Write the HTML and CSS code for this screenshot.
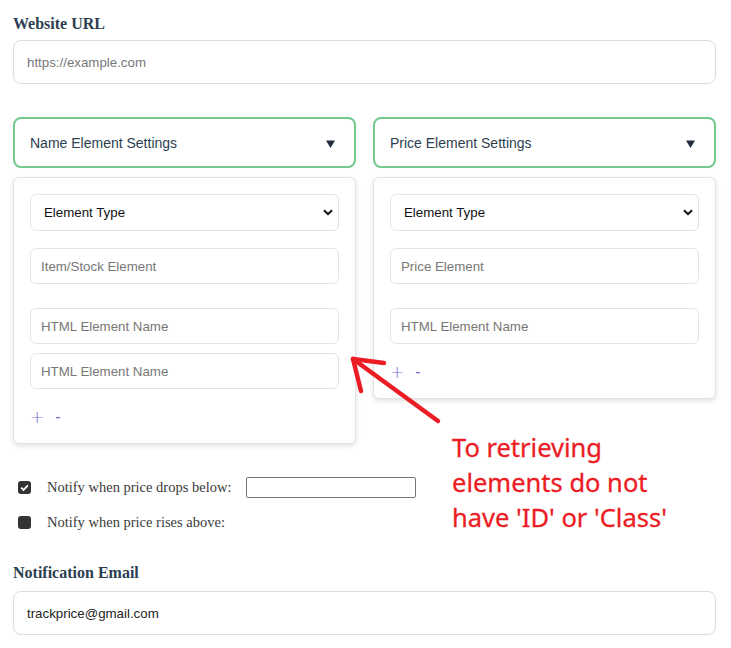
FILE: index.html
```html
<!DOCTYPE html>
<html lang="en">
<head>
<meta charset="utf-8">
<title>Price Tracker</title>
<link rel="stylesheet" href="styles.css">
</head>
<body>
<main class="page">
  <h2 class="field-label">Website URL</h2>
  <input class="text-input" type="text" placeholder="https://example.com">

  <div class="settings-grid">
    <section class="settings">
      <div class="settings-head">
        <span>Name Element Settings</span>
        <svg class="caret" width="9" height="8" viewBox="0 0 9 8"><path d="M0 0.5 H9 L4.5 8 Z" fill="#1f2d3d"/></svg>
      </div>
      <div class="settings-panel">
        <div class="select-wrap">
          <select class="type-select"><option>Element Type</option></select>
          <svg class="chev" width="10" height="7" viewBox="0 0 10 7"><path d="M1 1.2 L5 5.2 L9 1.2" fill="none" stroke="#111" stroke-width="2"/></svg>
        </div>
        <input class="small-input first" type="text" placeholder="Item/Stock Element">
        <div class="name-list">
          <input class="small-input" type="text" placeholder="HTML Element Name">
          <input class="small-input" type="text" placeholder="HTML Element Name">
        </div>
        <div class="controls"><span class="plus">+</span><span class="minus">-</span></div>
      </div>
    </section>

    <section class="settings">
      <div class="settings-head">
        <span>Price Element Settings</span>
        <svg class="caret" width="9" height="8" viewBox="0 0 9 8"><path d="M0 0.5 H9 L4.5 8 Z" fill="#1f2d3d"/></svg>
      </div>
      <div class="settings-panel">
        <div class="select-wrap">
          <select class="type-select"><option>Element Type</option></select>
          <svg class="chev" width="10" height="7" viewBox="0 0 10 7"><path d="M1 1.2 L5 5.2 L9 1.2" fill="none" stroke="#111" stroke-width="2"/></svg>
        </div>
        <input class="small-input first" type="text" placeholder="Price Element">
        <div class="name-list">
          <input class="small-input" type="text" placeholder="HTML Element Name">
        </div>
        <div class="controls"><span class="plus">+</span><span class="minus">-</span></div>
      </div>
    </section>
  </div>

  <div class="notify">
    <div class="notify-row">
      <span class="box checked"><svg width="13" height="13" viewBox="0 0 13 13"><path d="M3.2 6.6 L5.5 8.9 L9.9 4.3" fill="none" stroke="#fff" stroke-width="1.8"/></svg></span>
      <span class="notify-text">Notify when price drops below:</span>
      <input class="price-input" type="text">
    </div>
    <div class="notify-row">
      <span class="box"></span>
      <span class="notify-text">Notify when price rises above:</span>
    </div>
  </div>

  <h2 class="field-label email-label">Notification Email</h2>
  <input class="text-input value" type="text" value="trackprice@gmail.com">

  <svg class="arrow" width="731" height="648" viewBox="0 0 731 648">
    <g fill="none" stroke="#ec1c24" stroke-width="4.5" stroke-linecap="round" stroke-linejoin="round">
      <path d="M438 421 L353 359"/>
      <path d="M384 363 L353 359 L361 391"/>
    </g>
  </svg>
  <p class="note">To retrieving<br>elements do not<br>have 'ID' or 'Class'</p>
</main>
</body>
</html>
```

FILE: styles.css
```css
* { box-sizing: border-box; }

html, body {
  margin: 0;
  padding: 0;
  background: #ffffff;
}

.page {
  position: relative;
  width: 731px;
  height: 648px;
  padding: 14px 15px 0 13px;
  font-family: "Liberation Sans", Arial, sans-serif;
}

.field-label {
  margin: 0 0 6px;
  font-family: "Liberation Serif", "Times New Roman", serif;
  font-size: 16px;
  line-height: 20px;
  font-weight: bold;
  color: #2c3e50;
}

.text-input {
  display: block;
  width: 703px;
  height: 44px;
  padding: 0 13px;
  border: 1px solid #dcdcdc;
  border-radius: 8px;
  font-family: "Liberation Sans", Arial, sans-serif;
  font-size: 13.3px;
  color: #222;
  background: #fff;
  outline: none;
}

.text-input::placeholder { color: #777; }

.settings-grid {
  display: grid;
  grid-template-columns: 343px 343px;
  column-gap: 17px;
  align-items: start;
  margin-top: 33px;
}

.settings-head {
  display: flex;
  justify-content: space-between;
  align-items: center;
  height: 51px;
  padding: 0 19px 0 15px;
  border: 2px solid #72c98a;
  border-radius: 8px;
  font-size: 14px;
  color: #2c3e50;
}

.caret {
  display: block;
  margin-top: 2px;
}

.settings-panel {
  margin-top: 9px;
  padding: 16px;
  border: 1px solid #e2e2e2;
  border-radius: 6px;
  box-shadow: 0 2px 5px rgba(0, 0, 0, 0.12);
  background: #fff;
}

.select-wrap {
  position: relative;
  height: 37px;
}

.type-select {
  appearance: none;
  -webkit-appearance: none;
  width: 100%;
  height: 37px;
  padding: 0 13px;
  border: 1px solid #e4e4e4;
  border-radius: 6px;
  background: #fff;
  font-family: "Liberation Sans", Arial, sans-serif;
  font-size: 13.3px;
  color: #111;
}

.chev {
  position: absolute;
  right: 6px;
  top: 15px;
}

.small-input {
  display: block;
  width: 100%;
  height: 36px;
  padding: 0 10px;
  border: 1px solid #e4e4e4;
  border-radius: 6px;
  font-family: "Liberation Sans", Arial, sans-serif;
  font-size: 13.3px;
  background: #fff;
  outline: none;
}

.small-input::placeholder { color: #777; }

.small-input.first { margin-top: 17px; }

.name-list {
  display: flex;
  flex-direction: column;
  gap: 9px;
  margin-top: 24px;
}

.controls {
  display: flex;
  align-items: center;
  gap: 11px;
  height: 20px;
  margin-top: 18px;
  color: #7a72d2;
  font-family: "DejaVu Sans", sans-serif;
}

.plus {
  font-size: 17px;
  font-weight: 200;
  line-height: 20px;
}

.minus {
  font-size: 15px;
  line-height: 20px;
  color: #6f68c8;
}

.notify {
  display: flex;
  flex-direction: column;
  gap: 13px;
  margin-top: 32px;
}

.notify-row {
  display: flex;
  align-items: center;
  height: 22px;
  padding-left: 5px;
}

.box {
  display: inline-flex;
  width: 13px;
  height: 13px;
  border-radius: 3px;
  background: #333;
}

.notify-text {
  margin-left: 16px;
  font-family: "Liberation Serif", "Times New Roman", serif;
  font-size: 14.5px;
  color: #3a3a3a;
}

.price-input {
  width: 170px;
  height: 21px;
  margin-left: 15px;
  border: 1px solid #767676;
  border-radius: 2px;
  background: #fff;
}

.email-label { margin-top: 30px; margin-bottom: 8px; }

.arrow {
  position: absolute;
  left: 0;
  top: 0;
  pointer-events: none;
}

.note {
  position: absolute;
  left: 452px;
  top: 430px;
  margin: 0;
  font-family: "Noto Sans", sans-serif;
  font-size: 25.5px;
  line-height: 35px;
  color: #ec1c24;
  -webkit-text-stroke: 0.3px #ec1c24;
}
```
